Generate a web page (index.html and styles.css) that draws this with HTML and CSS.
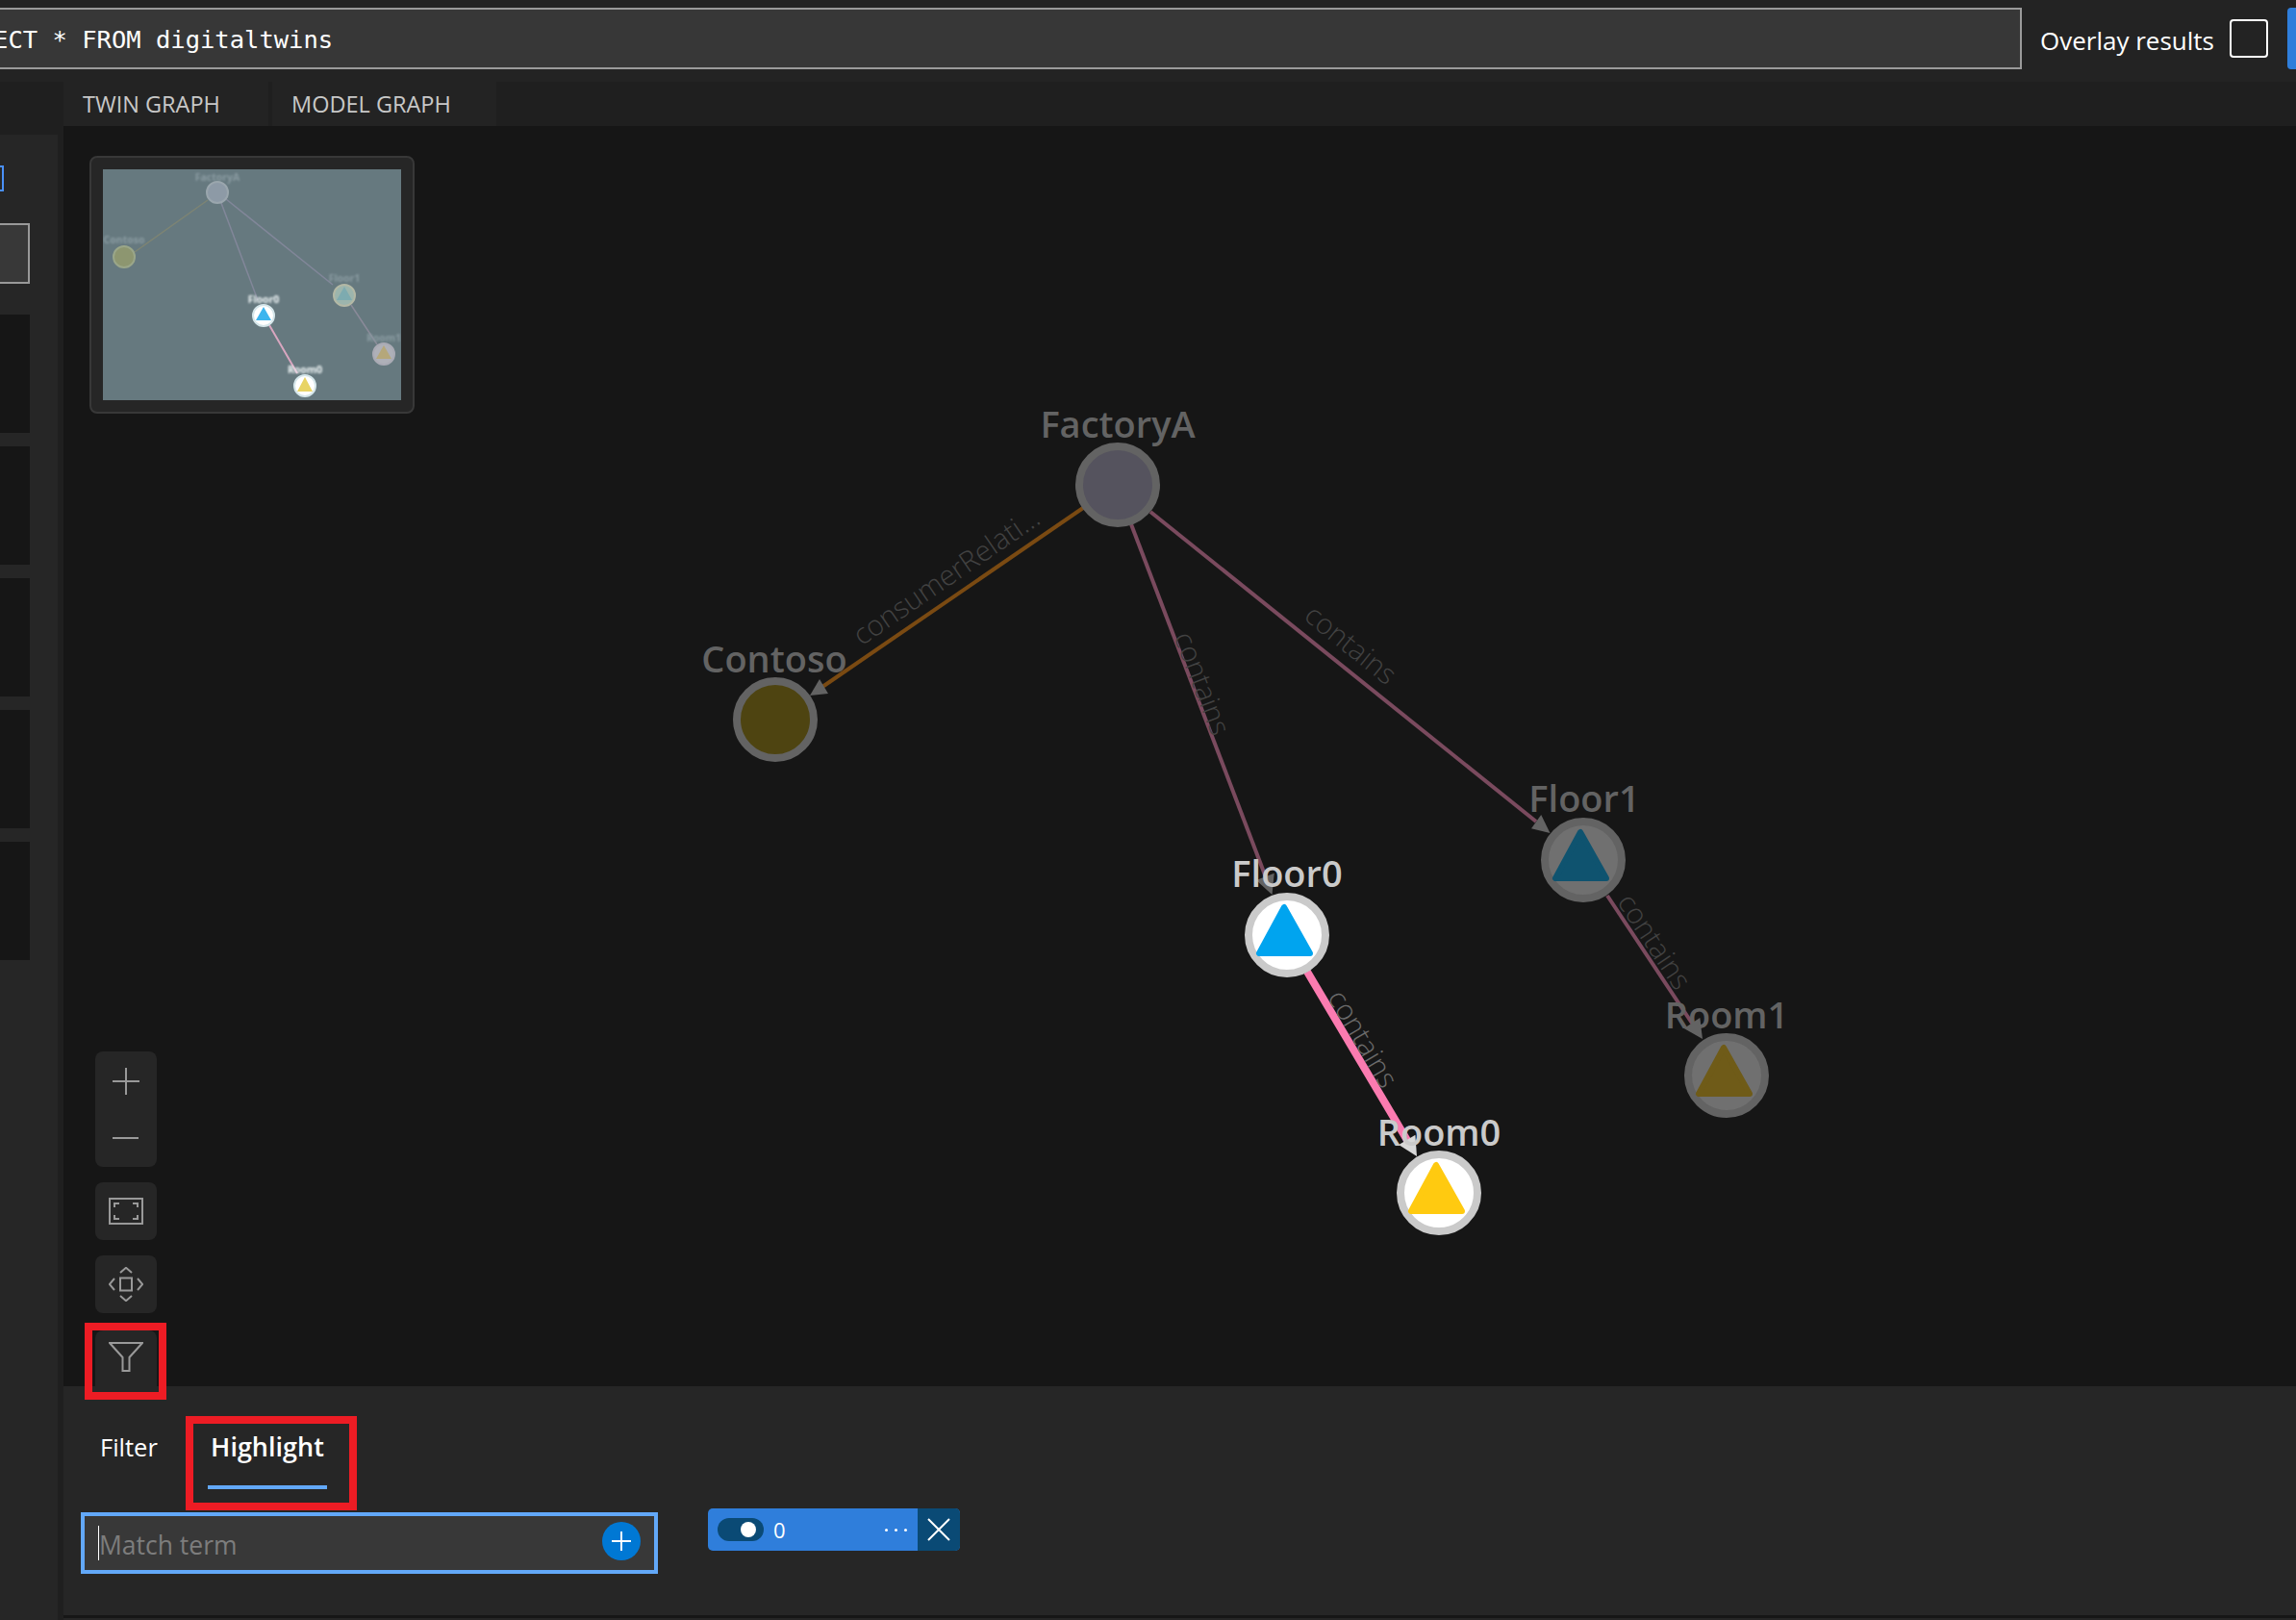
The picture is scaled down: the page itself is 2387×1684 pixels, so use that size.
FILE: index.html
```html
<!DOCTYPE html>
<html lang="en">
<head>
    <meta charset="UTF-8">
    <title>Azure Digital Twins Explorer</title>
    <link rel="stylesheet" href="styles.css">
</head>
<body>
    <header class="topbar">
        <div class="query-input">SELECT * FROM digitaltwins</div>
        <span class="overlay-label">Overlay results</span>
        <span class="checkbox"></span>
        <span class="run-button"></span>
    </header>

    <nav class="graph-tabs">
        <div class="graph-tab">TWIN GRAPH</div>
        <div class="graph-tab">MODEL GRAPH</div>
    </nav>

    <div class="main">
        <aside class="sidebar">
            <div class="side-check"></div>
            <div class="side-input"></div>
            <div class="side-card"></div>
            <div class="side-card"></div>
            <div class="side-card"></div>
            <div class="side-card"></div>
            <div class="side-card"></div>
        </aside>

        <div class="graph-panel">
            <section class="graph">
                <svg class="graph-canvas" viewBox="66 131 2321 1310">
                    <!-- edges -->
                    <line class="edge edge-consumer" x1="1126" y1="528" x2="855" y2="714"/>
                    <line class="edge edge-contains" x1="1176" y1="545" x2="1316" y2="912"/>
                    <line class="edge edge-contains" x1="1196" y1="532" x2="1597" y2="854"/>
                    <line class="edge edge-contains" x1="1671" y1="931" x2="1760" y2="1065"/>
                    <line class="edge edge-active" x1="1359" y1="1010" x2="1464" y2="1187"/>

                    <polygon class="arrow" points="842,723 861,721 852,706"/>
                    <polygon class="arrow" points="1322.5,930 1324.7,907.7 1306,915"/>
                    <polygon class="arrow" points="1611.5,866 1602.2,847 1592,861.3"/>
                    <polygon class="arrow" points="1770,1080 1767.3,1057.9 1750.7,1068.9"/>
                    <polygon class="arrow arrow-active" points="1473,1202 1471.4,1179.7 1454.2,1189.9"/>

                    <text class="edge-label" transform="translate(983 598) rotate(-34.5)">consumerRelati...</text>
                    <text class="edge-label" transform="translate(1251 710) rotate(69)">contains</text>
                    <text class="edge-label" transform="translate(1405 669) rotate(38.8)">contains</text>
                    <text class="edge-label" transform="translate(1721 978) rotate(56.5)">contains</text>
                    <text class="edge-label edge-label-active" transform="translate(1418 1079) rotate(59.3)">contains</text>

                    <!-- nodes -->
                    <circle class="node" cx="1162" cy="504" r="40" fill="#55535e"/>
                    <text class="node-label" x="1162" y="455">FactoryA</text>

                    <circle class="node" cx="806" cy="748" r="40" fill="#4e4411"/>
                    <text class="node-label" x="805" y="699">Contoso</text>

                    <g transform="translate(1338 972)">
                        <circle class="node node-active" r="40"/>
                        <polygon class="tri" points="-3,-29 -29,19 24,19" fill="#00a4ef" stroke="#00a4ef"/>
                        <text class="node-label node-label-active" y="-50">Floor0</text>
                    </g>

                    <g transform="translate(1646 894)">
                        <circle class="node" r="40" fill="#707070"/>
                        <polygon class="tri" points="-3,-29 -29,19 24,19" fill="#0f536f" stroke="#0f536f"/>
                        <text class="node-label" x="1" y="-50">Floor1</text>
                    </g>

                    <g transform="translate(1496 1240)">
                        <circle class="node node-active" r="40"/>
                        <polygon class="tri" points="-3,-29 -29,19 24,19" fill="#ffca10" stroke="#ffca10"/>
                        <text class="node-label node-label-active" y="-49">Room0</text>
                    </g>

                    <g transform="translate(1795 1118)">
                        <circle class="node" r="40" fill="#707070"/>
                        <polygon class="tri" points="-3,-29 -29,19 24,19" fill="#6f5b18" stroke="#6f5b18"/>
                        <text class="node-label" y="-49">Room1</text>
                    </g>
                </svg>

                <div class="minimap">
                    <svg class="minimap-view" viewBox="107 176 310 240">
                        <line x1="216" y1="208" x2="140" y2="262" stroke="#7d8474" stroke-width="1.5"/>
                        <line x1="230" y1="211" x2="268" y2="312" stroke="#82879a" stroke-width="1.5"/>
                        <line x1="235" y1="207" x2="346" y2="296" stroke="#82879a" stroke-width="1.5"/>
                        <line x1="365" y1="317" x2="392" y2="358" stroke="#8a8a99" stroke-width="1.5"/>
                        <line x1="280" y1="338" x2="309" y2="388" stroke="#d8a6c0" stroke-width="2"/>

                        <text class="mini-label" x="226" y="188">FactoryA</text>
                        <circle cx="226" cy="200" r="11" fill="#8d9aa6" stroke="#9aa6ad" stroke-width="2"/>
                        <text class="mini-label" x="129" y="253">Contoso</text>
                        <circle cx="129" cy="267" r="11" fill="#8d9670" stroke="#9aa689" stroke-width="2"/>

                        <text class="mini-label mini-label-active" x="274" y="315">Floor0</text>
                        <circle cx="274" cy="328" r="11" fill="#fff" stroke="#d5e6ea" stroke-width="2"/>
                        <polygon points="274,319 266,333 282,333" fill="#3db5ee"/>

                        <text class="mini-label" x="358" y="293">Floor1</text>
                        <circle cx="358" cy="307" r="11" fill="#9cb5ad" stroke="#b3b8a5" stroke-width="2"/>
                        <polygon points="358,298 350,312 366,312" fill="#7dabb0"/>

                        <text class="mini-label mini-label-active" x="317" y="388">Room0</text>
                        <circle cx="317" cy="401" r="11" fill="#fff" stroke="#d5e6ea" stroke-width="2"/>
                        <polygon points="317,392 309,407 325,407" fill="#e8d465"/>

                        <text class="mini-label" x="399" y="355">Room1</text>
                        <circle cx="399" cy="368" r="11" fill="#aeb0b8" stroke="#a9aab4" stroke-width="2"/>
                        <polygon points="399,359 391,373 407,373" fill="#b5a77a"/>
                    </svg>
                </div>

                <div class="controls">
                    <div class="control control-zoom">
                        <svg class="icon" viewBox="0 0 36 36">
                            <path d="M18 4V32M4 18H32"/>
                        </svg>
                        <svg class="icon" viewBox="0 0 36 36">
                            <path d="M4 18H31"/>
                        </svg>
                    </div>
                    <div class="control">
                        <svg class="icon" viewBox="0 0 36 36">
                            <path d="M1 5H35V31H1ZM11 10H6V14M25 10H30V14M11 26H6V22M25 26H30V22"/>
                        </svg>
                    </div>
                    <div class="control">
                        <svg class="icon" viewBox="0 0 36 36">
                            <path d="M12 11.5H24V24.500H12ZM12 6L18 0.800L24 6M12 30L18 35.200L24 30M6 12L0.800 18L6 24M30 12L35.200 18L30 24"/>
                        </svg>
                    </div>
                    <div class="control control-filter">
                        <svg class="icon icon-filter" viewBox="0 0 36 36">
                            <path d="M1 1H35L21.500 16V30H14.500V16Z"/>
                        </svg>
                    </div>
                </div>
                <div class="callout-filter"></div>
            </section>

            <section class="bottom-panel">
                <div class="filter-tabs">
                    <div class="filter-tab"><span class="filter-tab-text">Filter</span></div>
                    <div class="filter-tab filter-tab-active"><span class="filter-tab-text">Highlight</span></div>
                </div>
                <div class="filter-row">
                    <div class="match-input">
                        <span class="caret"></span>
                        <span class="placeholder">Match term</span>
                        <span class="add-button">
                            <svg viewBox="0 0 24 24"><path d="M12 2V22M2 12H22"/></svg>
                        </span>
                    </div>
                    <div class="chip">
                        <span class="toggle"><span class="toggle-knob"></span></span>
                        <span class="chip-count">0</span>
                        <span class="chip-more"><i></i><i></i><i></i></span>
                        <span class="chip-close">
                            <svg viewBox="0 0 24 24"><path d="M1 1L23 23M23 1L1 23"/></svg>
                        </span>
                    </div>
                </div>
            </section>
            <div class="panel-footer"></div>
        </div>
    </div>
</body>
</html>
```

FILE: styles.css
```css
/* Global Styles */
html, body {
    height: 100%;
}

body {
    margin: 0;
    overflow: hidden;
    background: #232323;
    color: #fff;
    font-family: 'Open Sans', 'Noto Sans', sans-serif;
}

/* Query bar */
.topbar {
    display: flex;
    align-items: center;
    height: 85px;
    padding-bottom: 5px;
    box-sizing: border-box;
}

.query-input {
    flex: 1;
    margin-left: -55px;
    height: 64px;
    line-height: 63px;
    box-sizing: border-box;
    border: 2px solid #9a9a9a;
    background: #373737;
    font-family: 'DejaVu Sans Mono', monospace;
    font-size: 25.5px;
    white-space: pre;
}

.overlay-label {
    margin-left: 19px;
    padding-top: 3px;
    font-size: 26px;
}

.checkbox {
    width: 40px;
    height: 40px;
    margin-left: 16px;
    box-sizing: border-box;
    border: 2px solid #fff;
    border-radius: 4px;
}

.run-button {
    width: 9px;
    height: 64px;
    margin-left: 20px;
    background: #2f7edb;
    border-radius: 4px 0 0 4px;
}

/* Twin / model tabs */
.graph-tabs {
    display: flex;
    gap: 4px;
    height: 46px;
    padding-left: 66px;
    background: #1f1f1f;
}

.graph-tab {
    padding: 0 20px;
    background: #232323;
    color: #c8c8c8;
    font-size: 23.5px;
    line-height: 46px;
}

.graph-tab:first-child {
    width: 213px;
    box-sizing: border-box;
}

.graph-tab:last-child {
    width: 233px;
    box-sizing: border-box;
}

.main {
    display: flex;
    height: 1553px;
}

/* Left column, cut off by the screenshot */
.sidebar {
    flex: none;
    width: 60px;
    border-top: 9px solid #1f1f1f;
    border-right: 6px solid #1f1f1f;
    background: #262626;
}

.side-check {
    width: 2px;
    height: 23px;
    margin-top: 32px;
    border: 2px solid #4a90f8;
    border-left: none;
}

.side-input {
    width: 29px;
    height: 59px;
    margin-top: 33px;
    border: 2px solid #999;
    border-left: none;
    background: #383838;
}

.side-card {
    width: 31px;
    height: 123px;
    margin-top: 14px;
    background: #161616;
}

.side-input + .side-card {
    margin-top: 32px;
}

.graph-panel {
    flex: 1;
    display: flex;
    flex-direction: column;
}

/* Graph canvas */
.graph {
    position: relative;
    height: 1310px;
    background: #161616;
}

.graph-canvas {
    position: absolute;
    left: 0;
    top: 0;
    width: 100%;
    height: 100%;
    font-family: 'Open Sans', sans-serif;
}

.edge {
    stroke-width: 4;
}

.edge-consumer {
    stroke: #7a4a12;
}

.edge-contains {
    stroke: #7a4a5e;
}

.edge-active {
    stroke: #fb7bb0;
    stroke-width: 8;
}

.arrow {
    fill: #636363;
}

.arrow-active {
    fill: #d8d8d8;
}

.edge-label {
    fill: #424242;
    font-size: 29.5px;
    font-weight: 300;
    text-anchor: middle;
    dominant-baseline: central;
}

.edge-label-active {
    fill: #6b6b6b;
}

.node {
    stroke: #636363;
    stroke-width: 8;
}

.node-active {
    stroke: #cacaca;
    fill: #fff;
}

.tri {
    stroke-width: 6;
    stroke-linejoin: round;
}

.node-label {
    fill: #636363;
    font-size: 38px;
    font-weight: 600;
    text-anchor: middle;
}

.node-label-active {
    fill: #cacaca;
}

/* Minimap */
.minimap {
    position: absolute;
    left: 27px;
    top: 31px;
    padding: 12px;
    background: #262626;
    border: 2px solid #383838;
    border-radius: 8px;
}

.minimap-view {
    display: block;
    width: 310px;
    height: 240px;
    background: #66797f;
}

.minimap-view circle, .minimap-view polygon, .minimap-view line {
    filter: blur(0.7px);
}

.mini-label {
    fill: #8b9ca2;
    font-size: 10.5px;
    font-weight: 700;
    text-anchor: middle;
    filter: blur(0.9px);
}

.mini-label-active {
    fill: #f2f8f9;
}

/* Zoom / fit buttons */
.controls {
    position: absolute;
    left: 33px;
    bottom: 0;
    display: flex;
    flex-direction: column;
    gap: 16px;
}

.control {
    width: 64px;
    height: 60px;
    display: flex;
    align-items: center;
    justify-content: center;
    background: #262626;
    border-radius: 8px;
}

.control-zoom {
    height: 120px;
    flex-direction: column;
    gap: 23px;
}

.control-filter {
    height: 58px;
    margin-top: 2px;
    border-radius: 8px 8px 0 0;
    align-items: flex-start;
}

.icon {
    width: 36px;
    height: 36px;
    fill: none;
    stroke: #999;
    stroke-width: 2;
}

.icon-filter {
    margin-top: 12px;
}

.callout-filter {
    position: absolute;
    left: 22px;
    top: 1244px;
    width: 69px;
    height: 64px;
    border: 8px solid #ed1c24;
}

/* Filter / highlight panel */
.bottom-panel {
    height: 238px;
    padding: 31px 0 0 30px;
    box-sizing: border-box;
    background: #262626;
}

.filter-tabs {
    display: flex;
}

.filter-tab {
    width: 60px;
    padding: 3px 21px 14px 0;
    border: 8px solid transparent;
    font-size: 25.5px;
    line-height: 42px;
}

.filter-tab-active {
    width: 124px;
    padding: 3px 23px 14px 15px;
    border-color: #ed1c24;
    font-size: 27px;
    font-weight: 600;
}

.filter-tab-text {
    display: block;
    padding-bottom: 19px;
    border-bottom: 4px solid transparent;
    white-space: nowrap;
}

.filter-tab-active .filter-tab-text {
    text-align: center;
    border-bottom-color: #62a8f8;
}

.filter-row {
    display: flex;
    align-items: flex-start;
    margin-top: -2px;
    margin-left: -12px;
}

.match-input {
    display: flex;
    align-items: center;
    width: 600px;
    height: 64px;
    margin-top: 4px;
    padding: 0 14px 0 14px;
    box-sizing: border-box;
    border: 4px solid #62a8f8;
    background: #383838;
}

.caret {
    width: 1px;
    height: 36px;
    background: #fff;
}

.placeholder {
    flex: 1;
    padding-top: 4px;
    color: #7d7d7d;
    font-size: 26.5px;
}

.add-button {
    display: flex;
    align-items: center;
    justify-content: center;
    width: 40px;
    height: 40px;
    margin-top: -4px;
    border-radius: 50%;
    background: #0078d4;
}

.add-button svg {
    width: 24px;
    height: 24px;
    fill: none;
    stroke: #fff;
    stroke-width: 2;
}

.chip {
    display: flex;
    align-items: center;
    width: 262px;
    height: 44px;
    margin-left: 52px;
    overflow: hidden;
    border-radius: 5px;
    background: #2f7edb;
}

.toggle {
    display: flex;
    align-items: center;
    justify-content: flex-end;
    width: 48px;
    height: 24px;
    margin-left: 10px;
    padding-right: 8px;
    box-sizing: border-box;
    border-radius: 12px;
    background: #0a4a75;
}

.toggle-knob {
    width: 16px;
    height: 16px;
    border-radius: 50%;
    background: #fff;
}

.chip-count {
    margin-left: 10px;
    font-size: 22px;
}

.chip-more {
    display: flex;
    gap: 7px;
    margin-left: auto;
    margin-right: 11px;
}

.chip-more i {
    width: 3px;
    height: 3px;
    border-radius: 50%;
    background: #fff;
}

.chip-close {
    display: flex;
    align-items: center;
    justify-content: center;
    width: 44px;
    height: 44px;
    background: #0a4a75;
}

.chip-close svg {
    width: 24px;
    height: 24px;
    fill: none;
    stroke: #fff;
    stroke-width: 2;
}

.panel-footer {
    height: 5px;
    box-sizing: border-box;
    border-top: 3px solid #161616;
    background: #262626;
}
```
